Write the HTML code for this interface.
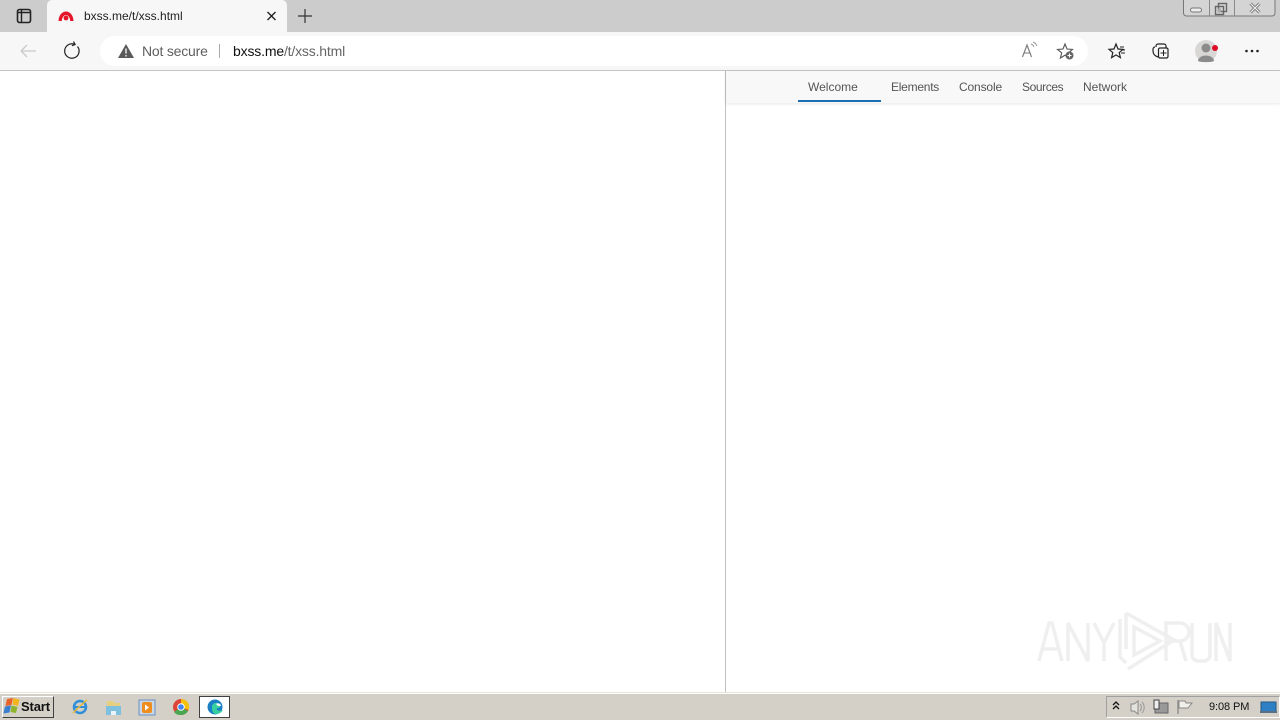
<!DOCTYPE html>
<html><head><meta charset="utf-8">
<style>
html,body{margin:0;padding:0;width:1280px;height:720px;overflow:hidden;background:#fff;font-family:"Liberation Sans",sans-serif}
div,span,svg{position:absolute;display:block}
.t{white-space:nowrap;line-height:16px}
</style></head>
<body>
<div style="left:0;top:0;width:1280px;height:32px;background:#cccccc"></div>
<div style="left:47px;top:0;width:240px;height:32px;background:#f7f7f7;border-radius:5px 5px 0 0"></div>
<div style="left:0;top:32px;width:1280px;height:38px;background:#f7f7f7"></div>
<div style="left:0;top:70px;width:1280px;height:1px;background:#c4c4c4"></div>
<div style="left:100px;top:36px;width:988px;height:30px;background:#fff;border-radius:15px"></div>

<svg style="left:0;top:0" width="360" height="70" viewBox="0 0 360 70" fill="none">
<rect x="17.500" y="9.500" width="13" height="13" rx="2" stroke="#222" stroke-width="1.600"/>
<path d="M18 12.500H30M21.500 10V22" stroke="#222" stroke-width="1.400"/>
<path d="M58.500 21a7.500 9.500 0 0 1 15 0h-3.300a3.900 5.500 0 0 0-8.400 0z" fill="#e5162a"/>
<circle cx="66" cy="18" r="2.400" fill="#e5162a"/>
<path d="M267.500 12l8 8M275.500 12l-8 8" stroke="#222" stroke-width="1.400"/>
<path d="M305 9v14M298 16h14" stroke="#333" stroke-width="1.200"/>
<path d="M21 51h15M21 51l6-6M21 51l6 6" stroke="#c9c9c9" stroke-width="1.300"/>
<path d="M77.500 46.500a7.200 7.200 0 1 1-3-2.200" stroke="#222" stroke-width="1.200"/>
<path d="M73.500 41.500l1.600 3-3.200 1.200" stroke="#222" stroke-width="1.200"/>
<path d="M126 44l8 14h-16z" fill="#5a5a5a"/>
<path d="M126 48.500v5M126 55v1.500" stroke="#fff" stroke-width="1.300"/>
<path d="M219.500 44v14" stroke="#aaa"/>
</svg>

<div class="t" style="left:84px;top:8px;font-size:12px;color:#222">bxss.me/t/xss.html</div>
<div class="t" style="left:142px;top:43px;font-size:14px;letter-spacing:-.2px;color:#5f5f5f">Not secure</div>
<div class="t" style="left:233px;top:43px;font-size:14px;letter-spacing:-.17px;color:#111">bxss.me<span style="position:static;display:inline;color:#666">/t/xss.html</span></div>

<svg style="left:1000px;top:0" width="280" height="70" viewBox="0 0 280 70" fill="none">
<path d="M183.500 0V13a3 3 0 0 0 3 3H272a3 3 0 0 0 3-3V0" stroke="#777" fill="#d4d4d4"/>
<path d="M209.500 0V16M234.500 0V16" stroke="#8a8a8a"/>
<rect x="190.500" y="8" width="11" height="4" rx="2" fill="#eee" stroke="#777"/>
<rect x="215.500" y="6.500" width="8" height="8" fill="#d4d4d4" stroke="#666" stroke-width="1.400"/>
<rect x="218.500" y="3.500" width="8" height="8" fill="none" stroke="#666" stroke-width="1.400"/>
<rect x="218" y="8.500" width="3" height="3.500" fill="#aaa"/>
<path d="M250.500 3.500l9 9M259.500 3.500l-9 9" stroke="#777" stroke-width="3"/>
<path d="M250.500 3.500l9 9M259.500 3.500l-9 9" stroke="#eee" stroke-width="1.200"/>
<path d="M22.500 57l4.500-12 4.500 12M24 53h6" stroke="#777" stroke-width="1.100"/>
<path d="M31 44a5 5 0 0 1 3 3M33 42a7 7 0 0 1 4 4" stroke="#999"/>
<path d="M65 44l2 5 5.500.4-4.200 3.400 1.300 5.200-4.600-2.900-4.600 2.900 1.300-5.200-4.200-3.400 5.500-.4z" stroke="#555" stroke-width="1.100"/>
<circle cx="69.500" cy="55.500" r="4" fill="#666"/>
<path d="M67.500 55.500h4M69.500 53.500v4" stroke="#fff"/>
<path d="M116 44l2 5 5 .4-3.800 3.200 1.200 5-4.400-2.700-4.400 2.700 1.200-5-3.800-3.200 5-.4z" stroke="#222" stroke-width="1.200"/>
<path d="M120 47h4M122 50h3M121 53h4" stroke="#222"/>
<path d="M156 47v-1a2 2 0 0 1 2-2h6a2 2 0 0 1 2 2v2" stroke="#222" stroke-width="1.200"/>
<path d="M158 57c-3-1-5-3-5-6v-2c0-1 1-2 2-2" stroke="#222" stroke-width="1.200"/>
<rect x="158.500" y="48" width="9.500" height="10" rx="1.500" stroke="#222" stroke-width="1.200"/>
<path d="M163.500 50v6M160.500 53h6" stroke="#222"/>
<circle cx="206" cy="51" r="11" fill="#d9d6d6"/>
<circle cx="206" cy="48" r="4.500" fill="#8b8b8b"/>
<path d="M198 61a8 5.500 0 0 1 16 0c-2 1.500-14 1.500-16 0z" fill="#8b8b8b"/>
<circle cx="215" cy="48" r="3" fill="#e00b25"/>
<circle cx="246.500" cy="51" r="1.300" fill="#222"/><circle cx="252" cy="51" r="1.300" fill="#222"/><circle cx="257.500" cy="51" r="1.300" fill="#222"/>
</svg>

<div style="left:725px;top:71px;width:1px;height:622px;background:#c0c0c0"></div>
<div style="left:726px;top:71px;width:554px;height:32px;background:#f8f8f8;box-shadow:0 1px 3px rgba(0,0,0,.1)"></div>
<div style="left:798px;top:100px;width:83px;height:2px;background:#1a6fb5"></div>
<div class="t" style="left:808px;top:79px;font-size:12px;color:#555">Welcome</div>
<div class="t" style="left:891px;top:79px;font-size:12px;letter-spacing:-.25px;color:#555">Elements</div>
<div class="t" style="left:959px;top:79px;font-size:12px;letter-spacing:-.15px;color:#555">Console</div>
<div class="t" style="left:1022px;top:79px;font-size:12px;letter-spacing:-.4px;color:#555">Sources</div>
<div class="t" style="left:1083px;top:79px;font-size:12px;color:#555">Network</div>

<svg style="left:1030px;top:605px" width="210" height="72" viewBox="0 0 210 72" fill="none" stroke="#efefef" stroke-width="3.500">
<path d="M9 56L19 18h3L32 56M13 44H28"/>
<path d="M38 56V18L58 56V18"/>
<path d="M64 18L74 38L84 18M74 38V56"/>
<path d="M90 14V52L96 58M96 8V44M96 8L144 35L98 64M104 22L130 36L104 50z"/>
<path d="M136 56V18H150a8 8 0 0 1 0 18H136M150 36L156 56"/>
<path d="M162 18V50a6 6 0 0 0 6 6h6a6 6 0 0 0 6-6V18"/>
<path d="M186 56V18L200 56V18"/>
</svg>

<div style="left:0;top:692px;width:1280px;height:1px;background:#e8e5dc"></div>
<div style="left:0;top:693px;width:1280px;height:27px;background:#d4d0c8;border-top:1px solid #fff;box-sizing:border-box"></div>

<div style="left:2px;top:696px;width:52px;height:22px;box-sizing:border-box;background:#d4d0c8;border:1px solid;border-color:#fff #404040 #404040 #fff"></div>
<svg style="left:3px;top:697px" width="18" height="18" viewBox="0 0 18 18">
<path d="M4 2l6-1-1.500 7-6 1z" fill="#e8622a"/><path d="M10.500 1l6 1.500-1.500 6.500-5.500-1.500z" fill="#f2b51d"/>
<path d="M2 9.500l6-1-1.500 7-6 1z" fill="#3a7fd0"/><path d="M8.500 8.500l6 1.500-1.500 6-5.500-1z" fill="#8fb52f"/>
</svg>
<div class="t" style="left:21px;top:699px;font-size:13px;letter-spacing:-.15px;font-weight:bold;color:#111">Start</div>

<svg style="left:70px;top:696px" width="165" height="22" viewBox="0 0 165 22" fill="none">
<circle cx="10" cy="11" r="6" stroke="#2f8fd8" stroke-width="2.500"/>
<path d="M5 11h10" stroke="#2f8fd8" stroke-width="2"/>
<path d="M3 17C6 14 14 6 17 4" stroke="#e8b93a" stroke-width="1.500"/>
<path d="M37 5h6l2 2h5v12H37z" fill="#e6cf7e"/>
<path d="M36 10h15v9H36z" fill="#7fc0df"/>
<path d="M41 19v-4h5v4z" fill="#e8f4f8"/>
<rect x="69" y="4" width="16" height="15" fill="#c9d6e6" stroke="#6c8fc0"/>
<rect x="72" y="6" width="10" height="11" rx="2" fill="#ef8d1f"/>
<path d="M75 8.500l4 3-4 3z" fill="#fff"/>
<circle cx="111" cy="11" r="8" fill="#dc4437"/>
<path d="M111 11l7 4a8 8 0 0 1-7 4a8 8 0 0 1-7-3z" fill="#4aa651"/>
<path d="M111 3a8 8 0 0 1 7.500 11L111 11z" fill="#f4c20d"/>
<circle cx="111" cy="11" r="3.800" fill="#fff"/><circle cx="111" cy="11" r="2.800" fill="#4285f4"/>
<rect x="129.500" y="0.500" width="30" height="21" fill="#fff" stroke="#404040"/>
<circle cx="145" cy="11" r="7.500" fill="#1a7fc4"/>
<path d="M142 12a4 4 0 0 1 8-2c1 2-2 2-3 2-1 2 2 4 6 2a8 8 0 0 1-7 4c-3 0-4-3-4-6z" fill="#36d0a0"/>
<path d="M146 8a3 3 0 0 1 5 2h-3z" fill="#fff"/>
</svg>

<div style="left:1106px;top:696px;width:174px;height:22px;box-sizing:border-box;border:1px solid;border-color:#a0a0a0 #fff #fff #a0a0a0"></div>
<svg style="left:1107px;top:697px" width="173" height="20" viewBox="0 0 173 20" fill="none">
<path d="M6 8l3-3 3 3M6 12l3-3 3 3" stroke="#111" stroke-width="1.300"/>
<path d="M24 7h3l4-3v13l-4-3h-3z" fill="#e4e2dc" stroke="#888"/>
<path d="M33 7a5 5 0 0 1 0 7M35 5a8 8 0 0 1 0 11" stroke="#999"/>
<rect x="48" y="6" width="13" height="10" fill="#999" stroke="#666"/>
<rect x="47" y="3" width="5" height="9" fill="#eee" stroke="#444"/>
<path d="M71 3v14" stroke="#888" stroke-width="1.300"/>
<path d="M72 4h6l1 2h6l-4 5h-9z" fill="#f1efe9" stroke="#888"/>
<rect x="154" y="5" width="15" height="10" fill="#2e7fc4" stroke="#27567f"/>
<rect x="153" y="14" width="17" height="2" fill="#5a6f85"/>
</svg>
<div class="t" style="left:1209px;top:699px;font-size:11px;letter-spacing:-.1px;color:#111">9:08 PM</div>
</body></html>
